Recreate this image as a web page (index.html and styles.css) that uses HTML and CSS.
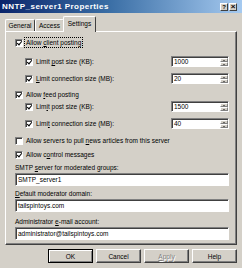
FILE: index.html
```html
<!DOCTYPE html>
<html>
<head>
<meta charset="utf-8">
<link rel="stylesheet" href="styles.css">
</head>
<body>
<div class="titlebar">
  <span class="title">NNTP_server1 Properties</span>
  <div class="tbtns"><span class="tbtn">?</span><span class="tbtn x">×</span></div>
</div>
<div class="tabs">
  <div class="tab w1">General</div>
  <div class="tab w2">Access</div>
  <div class="tab active">Settings</div>
</div>
<div class="panel">
  <div class="row r1 lvl1"><span class="cb on"></span><span class="lbl focus">Allow <u>c</u>lient posting</span></div>
  <div class="row r2 lvl2 spread"><div class="ck"><span class="cb on"></span><span class="lbl">Limit <u>p</u>ost size (KB):</span></div><div class="spin"><span class="val">1000</span><span class="arrows"><span class="ab up"></span><span class="ab dn"></span></span></div></div>
  <div class="row r3 lvl2 spread"><div class="ck"><span class="cb on"></span><span class="lbl"><u>L</u>imit connection size (MB):</span></div><div class="spin"><span class="val">20</span><span class="arrows"><span class="ab up"></span><span class="ab dn"></span></span></div></div>
  <div class="row r4 lvl1"><span class="cb on"></span><span class="lbl">Allow <u>f</u>eed posting</span></div>
  <div class="row r5 lvl2 spread"><div class="ck"><span class="cb on"></span><span class="lbl">Lim<u>i</u>t post size (KB):</span></div><div class="spin"><span class="val">1500</span><span class="arrows"><span class="ab up"></span><span class="ab dn"></span></span></div></div>
  <div class="row r6 lvl2 spread"><div class="ck"><span class="cb on"></span><span class="lbl">Limi<u>t</u> connection size (MB):</span></div><div class="spin"><span class="val">40</span><span class="arrows"><span class="ab up"></span><span class="ab dn"></span></span></div></div>
  <div class="row r7 lvl1"><span class="cb"></span><span class="lbl">Allow servers to pull <u>n</u>ews articles from this server</span></div>
  <div class="row r8 lvl1"><span class="cb on"></span><span class="lbl">Allow c<u>o</u>ntrol messages</span></div>
  <div class="flabel l1">SMTP <u>s</u>erver for moderated groups:</div>
  <div class="field">SMTP_server1</div>
  <div class="flabel l2"><u>D</u>efault moderator domain:</div>
  <div class="field">tailspintoys.com</div>
  <div class="flabel l3">Administrator <u>e</u>-mail account:</div>
  <div class="field">administrator@tailspintoys.com</div>
</div>
<div class="buttons">
  <div class="btn default">OK</div>
  <div class="btn">Cancel</div>
  <div class="btn disabled"><u>A</u>pply</div>
  <div class="btn">Help</div>
</div>
</body>
</html>
```

FILE: styles.css
```css
* { box-sizing: border-box; }
body {
  margin: 0;
  width: 242px;
  height: 268px;
  overflow: hidden;
  background: #d4d0c8;
  font-family: "Liberation Sans", Arial, sans-serif;
  font-size: 6.5px;
  color: #000;
}
u { text-decoration: underline; text-underline-offset: 1px; text-decoration-thickness: 0.6px; }

.titlebar {
  height: 13px;
  background: linear-gradient(to right, #0a246a 0%, #3a6ea5 45%, #a6caf0 100%);
  display: flex;
  align-items: center;
  justify-content: space-between;
  padding: 0 5px 0 2px;
}
.title {
  color: #fff;
  font-weight: bold;
  font-size: 8px;
  letter-spacing: 0.45px;
}
.tbtns { display: flex; gap: 1px; }
.tbtn {
  width: 8px;
  height: 8px;
  background: #d4d0c8;
  border: 1px solid;
  border-color: #fff #404040 #404040 #fff;
  font-size: 6px;
  font-weight: bold;
  line-height: 6px;
  text-align: center;
  color: #000;
}
.tbtn.x { font-size: 8px; line-height: 5px; }

.tabs {
  height: 18px;
  display: flex;
  align-items: flex-end;
  padding-left: 5px;
}
.tab {
  height: 12px;
  border: 1px solid;
  border-color: #fff #404040 transparent #fff;
  border-bottom: 0;
  border-radius: 2px 2px 0 0;
  display: flex;
  align-items: center;
  justify-content: center;
}
.tab.w1 { width: 30px; }
.tab.w2 { width: 29px; }
.tab.active {
  width: 33px;
  height: 16px;
  margin-left: -1px;
  margin-bottom: -1px;
  background: #d4d0c8;
  position: relative;
  z-index: 2;
  padding-bottom: 3px;
}

.panel {
  margin-left: 5px;
  width: 232px;
  height: 214px;
  border: 1px solid;
  border-color: #fff #404040 #404040 #fff;
  box-shadow: inset -1px -1px 0 #808080;
  padding: 5px 7px 0 9px;
  position: relative;
  z-index: 1;
}

.row { height: 11px; display: flex; align-items: center; }
.row.lvl2 { padding-left: 10px; }
.row.spread { justify-content: space-between; }
.ck { display: flex; align-items: center; }
.r2 { margin-top: 8px; }
.r3 { margin-top: 6px; }
.r4 { margin-top: 5px; }
.r5 { margin-top: 1px; }
.r6 { margin-top: 6px; }
.r7 { margin-top: 6px; }
.r8 { margin-top: 3px; }

.cb {
  width: 8px;
  height: 8px;
  flex: none;
  background: #fff;
  border: 1px solid;
  border-color: #808080 #fff #fff #808080;
  box-shadow: inset 1px 1px 0 #404040;
  margin-right: 2px;
  position: relative;
}
.cb.on::after {
  content: "";
  position: absolute;
  left: 1.5px;
  top: 0.5px;
  width: 2px;
  height: 4px;
  border: solid #000;
  border-width: 0 1.4px 1.4px 0;
  transform: rotate(40deg);
}
.lbl { white-space: nowrap; line-height: 9px; padding: 0 1px; }
.lbl.focus { outline: 1px dotted #000; outline-offset: 0; }

.spin {
  width: 58px;
  height: 11px;
  background: #fff;
  border: 1px solid;
  border-color: #808080 #fff #fff #808080;
  box-shadow: inset 1px 1px 0 #404040;
  display: flex;
  align-items: stretch;
  justify-content: space-between;
  padding: 1px 0 0 1px;
}
.val { padding-left: 1px; line-height: 8px; }
.arrows { width: 8px; display: flex; flex-direction: column; }
.ab {
  flex: 1;
  background: #d4d0c8;
  border: 1px solid;
  border-color: #fff #808080 #808080 #fff;
  display: flex;
  align-items: center;
  justify-content: center;
}
.ab::after {
  content: "";
  border-left: 1.5px solid transparent;
  border-right: 1.5px solid transparent;
}
.ab.up::after { border-bottom: 1.5px solid #000; }
.ab.dn::after { border-top: 1.5px solid #000; }

.flabel { height: 9px; line-height: 9px; white-space: nowrap; }
.l1 { margin-top: 3px; }
.l2 { margin-top: 3px; }
.l3 { margin-top: 5px; }
.field {
  height: 13px;
  margin-top: 1px;
  background: #fff;
  border: 1px solid;
  border-color: #808080 #fff #fff #808080;
  box-shadow: inset 1px 1px 0 #404040;
  padding-left: 2px;
  line-height: 11px;
  white-space: nowrap;
}

.buttons {
  display: flex;
  justify-content: flex-end;
  gap: 3px;
  padding: 4px 5px 0 0;
}
.btn {
  width: 45px;
  height: 14px;
  border: 1px solid;
  border-color: #fff #404040 #404040 #fff;
  box-shadow: inset -1px -1px 0 #808080;
  display: flex;
  align-items: center;
  justify-content: center;
}
.btn.default {
  border: 1px solid #000;
  box-shadow: inset 1px 1px 0 #fff, inset -1px -1px 0 #808080;
}
.btn.disabled { color: #808080; text-shadow: 1px 1px 0 #fff; }
```
